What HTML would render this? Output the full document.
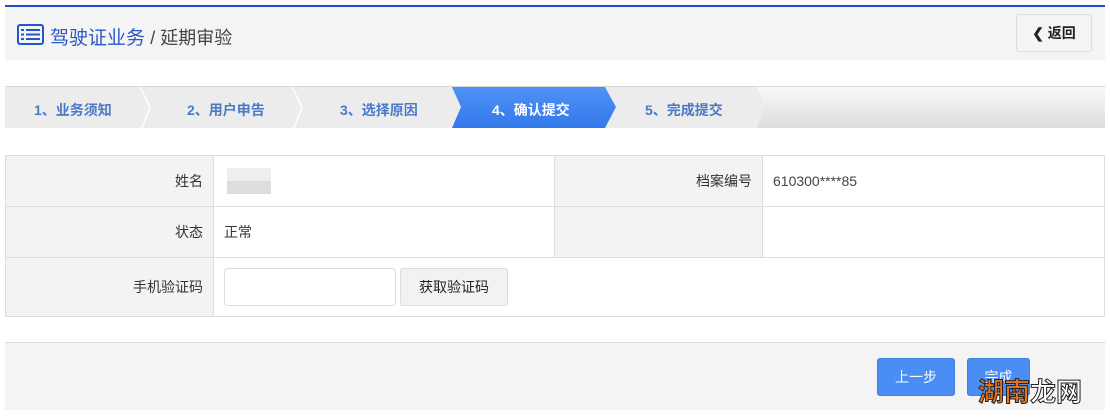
<!DOCTYPE html>
<html><head><meta charset="utf-8"><style>
*{margin:0;padding:0;box-sizing:border-box}
body{width:1110px;height:417px;background:#fff;position:relative;overflow:hidden;font-family:"Liberation Sans","Noto Sans CJK SC",sans-serif;font-size:14px;color:#333}
.a{position:absolute}
.lab{background:#f3f3f3;text-align:right;padding-right:10px;color:#333}
.cell{position:absolute;border:1px solid #ddd;display:flex;align-items:center}
.btn{position:absolute;background:#4a8ef5;color:#fff;border:1px solid #3f7fe0;border-radius:3px;font-size:14px;display:flex;align-items:center;justify-content:center}
</style></head><body>
<div class="a" style="left:5px;top:5px;width:1100px;height:2px;background:#1f4fc9"></div>
<div class="a" style="left:5px;top:7px;width:1100px;height:53px;background:#f4f4f4"></div>
<svg class="a" style="left:17px;top:24px" width="27" height="21" viewBox="0 0 27 21"><rect x="1" y="1" width="25" height="19" rx="2" fill="none" stroke="#2256cc" stroke-width="2"/><rect x="4" y="5" width="3" height="2" fill="#2256cc"/><rect x="9" y="5" width="14" height="2" fill="#2256cc"/><rect x="4" y="9.5" width="3" height="2" fill="#2256cc"/><rect x="9" y="9.5" width="14" height="2" fill="#2256cc"/><rect x="4" y="14" width="3" height="2" fill="#2256cc"/><rect x="9" y="14" width="14" height="2" fill="#2256cc"/></svg>
<div class="a" style="left:50px;top:23px;font-size:19px;color:#2a5ac8;white-space:nowrap">驾驶证业务 <span style="color:#444;font-size:18px">/ 延期审验</span></div>
<div class="a" style="left:1016px;top:14px;width:76px;height:38px;border:1px solid #ddd;border-radius:3px;background:#f4f4f4;display:flex;align-items:center;justify-content:center;font-size:14px;font-weight:bold;color:#222">&#10094; 返回</div>
<svg class="a" style="left:0;top:86px" width="1110" height="42">
<defs><linearGradient id="g" x1="0" y1="0" x2="0" y2="1"><stop offset="0" stop-color="#fafafa"/><stop offset="1" stop-color="#dcdcdc"/></linearGradient>
<linearGradient id="b" x1="0" y1="0" x2="0" y2="1"><stop offset="0" stop-color="#4e91f6"/><stop offset="1" stop-color="#3479ea"/></linearGradient></defs>
<rect x="5" y="0" width="1100" height="42" fill="url(#g)"/>
<rect x="5" y="0" width="1100" height="1" fill="#d8d8d8"/>
<polygon points="5,1 757,1 765,21 757,42 5,42" fill="#ececec"/>
<polyline points="140,1 150,21 142,42" fill="none" stroke="#fff" stroke-width="1.5"/>
<polyline points="292,1 302,21 294,42" fill="none" stroke="#fff" stroke-width="1.5"/>
<polygon points="452,1 605,1 616,21 605,42 452,42 461,21" fill="url(#b)"/>
<g font-size="14" font-weight="bold" font-family="Liberation Sans,Noto Sans CJK SC,sans-serif">
<text x="34" y="29" fill="#4a79c8">1、业务须知</text>
<text x="187" y="29" fill="#4a79c8">2、用户申告</text>
<text x="340" y="29" fill="#4a79c8">3、选择原因</text>
<text x="492" y="29" fill="#fff">4、确认提交</text>
<text x="645" y="29" fill="#4a79c8">5、完成提交</text>
</g>
</svg>
<div class="cell lab" style="left:5px;top:155px;width:209px;height:52px;justify-content:flex-end">姓名</div>
<div class="cell" style="left:213px;top:155px;width:342px;height:52px"><div style="margin-left:13px;width:44px;height:26px;background:linear-gradient(#eee 50%,#ddd 50%)"></div></div>
<div class="cell lab" style="left:554px;top:155px;width:209px;height:52px;justify-content:flex-end">档案编号</div>
<div class="cell" style="left:762px;top:155px;width:343px;height:52px;padding-left:10px;color:#444">610300****85</div>
<div class="cell lab" style="left:5px;top:206px;width:209px;height:52px;justify-content:flex-end">状态</div>
<div class="cell" style="left:213px;top:206px;width:342px;height:52px;padding-left:10px">正常</div>
<div class="cell lab" style="left:554px;top:206px;width:209px;height:52px"></div>
<div class="cell" style="left:762px;top:206px;width:343px;height:52px"></div>
<div class="cell lab" style="left:5px;top:257px;width:209px;height:60px;justify-content:flex-end">手机验证码</div>
<div class="cell" style="left:213px;top:257px;width:892px;height:60px"></div>
<div class="a" style="left:224px;top:268px;width:172px;height:38px;border:1px solid #ddd;border-radius:4px;background:#fff"></div>
<div class="a" style="left:400px;top:268px;width:108px;height:38px;border:1px solid #ddd;border-radius:3px;background:#f2f2f2;display:flex;align-items:center;justify-content:center;color:#222">获取验证码</div>
<div class="a" style="left:5px;top:342px;width:1100px;height:68px;background:#f4f4f4;border-top:1px solid #ddd"></div>
<div class="btn" style="left:877px;top:358px;width:78px;height:38px">上一步</div>
<div class="btn" style="left:967px;top:358px;width:63px;height:38px">完成</div>
<div class="a" style="left:978px;top:372px;font-size:26px;font-weight:bold;color:#e8741a;-webkit-text-stroke:1px #222;white-space:nowrap">湖南<span style="color:#fff">龙网</span></div>
</body></html>
